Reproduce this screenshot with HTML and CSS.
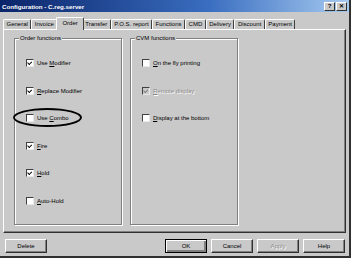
FILE: index.html
```html
<!DOCTYPE html>
<html lang="en">
  <head>
    <meta charset="UTF-8" />
    <title>Configuration - C.reg.server</title>
    <link rel="stylesheet" href="styles.css">
  </head>
  <body>
    <div class="window">
      <div class="titlebar">
        <span class="title">Configuration - C.reg.server</span>
        <div class="caption-btns">
          <span class="cap-btn">?</span>
          <span class="cap-btn">&#x2715;</span>
        </div>
      </div>

      <div class="tabs">
        <div class="tab">General</div>
        <div class="tab">Invoice</div>
        <div class="tab active">Order</div>
        <div class="tab">Transfer</div>
        <div class="tab">P.O.S. report</div>
        <div class="tab">Functions</div>
        <div class="tab">CMD</div>
        <div class="tab">Delivery</div>
        <div class="tab">Discount</div>
        <div class="tab">Payment</div>
      </div>

      <div class="panel">
        <div class="group">
          <div class="group-label">Order functions</div>
          <div class="rows">
            <div class="check on"><span class="box"></span><span>Use <u>M</u>odifier</span></div>
            <div class="check on"><span class="box"></span><span><u>R</u>eplace Modifier</span></div>
            <div class="check"><span class="box"></span><span>Use <u>C</u>ombo</span></div>
            <div class="check on"><span class="box"></span><span><u>F</u>ire</span></div>
            <div class="check on"><span class="box"></span><span><u>H</u>old</span></div>
            <div class="check"><span class="box"></span><span><u>A</u>uto-Hold</span></div>
          </div>
          <div class="circle"></div>
        </div>

        <div class="group">
          <div class="group-label">CVM functions</div>
          <div class="rows">
            <div class="check"><span class="box"></span><span><u>O</u>n the fly printing</span></div>
            <div class="check on disabled"><span class="box"></span><span><u>R</u>emote display</span></div>
            <div class="check"><span class="box"></span><span><u>D</u>isplay at the bottom</span></div>
          </div>
        </div>
      </div>

      <div class="buttons">
        <button class="btn">Delete</button>
        <div class="btn-group">
          <button class="btn default">OK</button>
          <button class="btn">Cancel</button>
          <button class="btn disabled">Apply</button>
          <button class="btn">Help</button>
        </div>
      </div>
    </div>
  </body>
</html>
```

FILE: styles.css
```css
* {
  margin: 0;
  padding: 0;
  box-sizing: border-box;
}

body {
  font-family: "Liberation Sans", Arial, sans-serif;
  font-size: 6px;
  color: #000;
  background: #c9c9c9;
}

.window {
  width: 351px;
  height: 258px;
  background: #c9c9c9;
  border-right: 2px solid #303030;
  border-bottom: 2px solid #303030;
  display: flex;
  flex-direction: column;
}

/* title bar */
.titlebar {
  height: 12px;
  background: linear-gradient(to right, #0a246a, #3a6ec0 60%, #a6caf0);
  display: flex;
  align-items: center;
  justify-content: space-between;
  padding: 0 2px 0 2px;
  color: #fff;
  font-weight: bold;
  font-size: 6.2px;
}

.caption-btns {
  display: flex;
  gap: 1px;
}

.cap-btn {
  width: 11px;
  height: 9px;
  background: #c9c9c9;
  color: #000;
  border-top: 1px solid #fff;
  border-left: 1px solid #fff;
  border-right: 1px solid #303030;
  border-bottom: 1px solid #303030;
  display: flex;
  align-items: center;
  justify-content: center;
  font-size: 6px;
  font-weight: bold;
  line-height: 1;
}

/* tabs */
.tabs {
  display: flex;
  align-items: flex-end;
  height: 17px;
  padding-left: 3px;
}

.tab {
  height: 10px;
  line-height: 9px;
  padding: 0 2.5px;
  border-top: 1px solid #fff;
  border-left: 1px solid #fff;
  border-right: 1px solid #404040;
  border-radius: 2px 2px 0 0;
}

.tab.active {
  height: 13px;
  line-height: 10px;
  margin: 0 -2px -1px -1px;
  padding: 0 5px;
  background: #c9c9c9;
  position: relative;
  z-index: 1;
}

/* tab page */
.panel {
  margin: 0 3px;
  height: 204px;
  border-top: 1px solid #fff;
  border-left: 1px solid #fff;
  border-right: 1px solid #303030;
  border-bottom: 1px solid #303030;
  box-shadow: inset -1px -1px #808080;
  display: flex;
  gap: 8px;
  padding: 8px 0 0 10px;
}

.group {
  position: relative;
  width: 108px;
  height: 187px;
  border: 1px solid #808080;
  box-shadow: inset 1px 1px #fff, 1px 1px #fff;
}

.group-label {
  display: inline-block;
  height: 8px;
  line-height: 8px;
  margin: -5px 0 0 4px;
  padding: 0 1px;
  background: #c9c9c9;
  position: relative;
  vertical-align: top;
}

.rows {
  display: flex;
  flex-direction: column;
  gap: 19.5px;
  padding: 14px 0 0 11px;
}

.check {
  display: flex;
  align-items: center;
  gap: 3px;
  height: 8px;
  line-height: 8px;
}

.box {
  width: 8px;
  height: 8px;
  background: #fff;
  border-top: 1px solid #404040;
  border-left: 1px solid #404040;
  border-right: 1px solid #e8e8e8;
  border-bottom: 1px solid #e8e8e8;
  position: relative;
}

.check.on .box::after {
  content: "";
  position: absolute;
  left: 1px;
  top: 1px;
  width: 3px;
  height: 2px;
  border-left: 1.5px solid #000;
  border-bottom: 1.5px solid #000;
  transform: rotate(-45deg);
  transform-origin: 2px 2px;
}

.check.disabled {
  color: #8a8a8a;
  text-shadow: 1px 1px 0 #fff;
}

.check.disabled .box {
  background: #c9c9c9;
}

.check.disabled .box::after {
  border-color: #808080;
}

.circle {
  position: absolute;
  left: -2px;
  top: 69px;
  width: 69px;
  height: 19px;
  border: 2px solid #000;
  border-radius: 50%;
}

/* bottom buttons */
.buttons {
  display: flex;
  justify-content: space-between;
  padding: 6px 4px 0 5px;
}

.btn-group {
  display: flex;
  gap: 4px;
}

.btn {
  width: 42px;
  height: 14px;
  font-family: inherit;
  font-size: 6px;
  background: #c9c9c9;
  border-top: 1px solid #fff;
  border-left: 1px solid #fff;
  border-right: 1px solid #303030;
  border-bottom: 1px solid #303030;
  box-shadow: inset -1px -1px #808080;
}

.btn.default {
  border: 1px solid #000;
  box-shadow: inset 1px 1px #fff, inset -2px -2px #808080;
}

.btn.disabled {
  color: #8a8a8a;
  text-shadow: 1px 1px 0 #fff;
}
```
